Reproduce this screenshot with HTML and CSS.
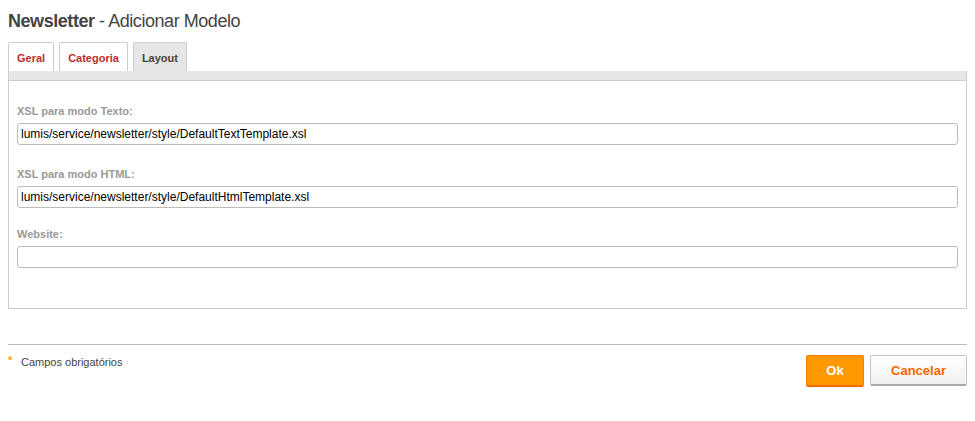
FILE: index.html
```html
<!DOCTYPE html>
<html lang="pt">

<head>
    <meta charset="UTF-8">
    <title>Newsletter - Adicionar Modelo</title>
    <link rel="stylesheet" href="styles.css">
</head>

<body>
    <h1><strong>Newsletter</strong> - Adicionar Modelo</h1>
    <ul class="tabs">
        <li class="tab">Geral</li>
        <li class="tab">Categoria</li>
        <li class="tab active">Layout</li>
    </ul>
    <div class="panel">
        <div class="panel-head"></div>
        <div class="panel-body">
            <div class="field">
                <label for="xsl-text">XSL para modo Texto:</label>
                <input id="xsl-text" type="text" value="lumis/service/newsletter/style/DefaultTextTemplate.xsl">
            </div>
            <div class="field">
                <label for="xsl-html">XSL para modo HTML:</label>
                <input id="xsl-html" type="text" value="lumis/service/newsletter/style/DefaultHtmlTemplate.xsl">
            </div>
            <div class="field">
                <label for="website">Website:</label>
                <input id="website" type="text" value="">
            </div>
        </div>
    </div>
    <div class="footer">
        <p class="required"><span class="star">*</span>Campos obrigatórios</p>
        <div class="buttons">
            <button class="btn btn-ok">Ok</button>
            <button class="btn btn-cancel">Cancelar</button>
        </div>
    </div>
</body>

</html>
```

FILE: styles.css
```css
* {
    margin: 0;
    padding: 0;
    box-sizing: border-box;
}

body {
    background-color: #fff;
    font-family: "Liberation Sans", Arial, sans-serif;
    color: #444;
    padding: 0 8px;
}

h1 {
    font-size: 18px;
    font-weight: normal;
    color: #444;
    padding-top: 11px;
    line-height: 20px;
    letter-spacing: -0.45px;
}

h1 strong {
    font-weight: bold;
}

.tabs {
    list-style: none;
    display: flex;
    gap: 5px;
    margin-top: 11px;
}

.tab {
    height: 29px;
    padding: 9px 8px 0;
    border: 1px solid #ccc;
    border-bottom: none;
    border-radius: 2px 2px 0 0;
    background-color: #fff;
    font-size: 11px;
    font-weight: bold;
    color: #bf2c2c;
}

.tab.active {
    background-color: #e6e6e6;
    color: #444;
}

.panel {
    border: 1px solid #ccc;
    border-top: none;
    height: 238px;
}

.panel-head {
    height: 10px;
    background-color: #e6e6e6;
    border-bottom: 1px solid #ccc;
}

.panel-body {
    padding: 24px 8px 0;
}

.field {
    margin-bottom: 23px;
}

.field:nth-child(2) {
    margin-bottom: 20px;
}

label {
    display: block;
    font-size: 11px;
    font-weight: bold;
    color: #999;
    line-height: 13px;
    margin-bottom: 5px;
}

input {
    display: block;
    width: 100%;
    height: 22px;
    padding: 0 3px;
    border: 1px solid #bbb;
    border-radius: 3px;
    font-family: "Liberation Sans", Arial, sans-serif;
    font-size: 12px;
    color: #000;
}

.footer {
    margin-top: 35px;
    border-top: 1px solid #bbb;
    display: flex;
    justify-content: space-between;
    align-items: flex-start;
}

.required {
    font-size: 11px;
    color: #444;
    margin-top: 9px;
}

.star {
    display: inline-block;
    width: 13px;
    color: #f5a300;
    font-size: 11px;
    font-weight: bold;
    vertical-align: 2px;
}

.buttons {
    display: flex;
    gap: 6px;
    margin-top: 10px;
}

.btn {
    font-family: "Liberation Sans", Arial, sans-serif;
    font-size: 13px;
    font-weight: bold;
    height: 32px;
    border-radius: 2px;
    cursor: pointer;
}

.btn-ok {
    width: 58px;
    background-color: #f90;
    color: #fff;
    border: 1px solid #f77f00;
    border-bottom: 2px solid #f26c00;
}

.btn-cancel {
    width: 97px;
    height: 31px;
    background: linear-gradient(#fff, #f0f0f0);
    color: #f60;
    border: 1px solid #c4c4c4;
    border-bottom: 2px solid #aaa;
}
```
